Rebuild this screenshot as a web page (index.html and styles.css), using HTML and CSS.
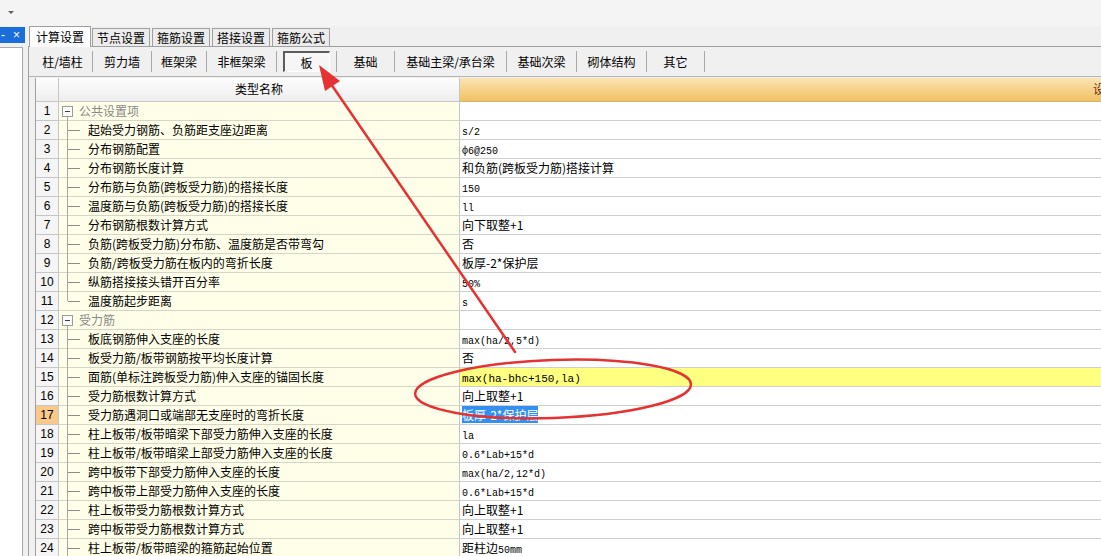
FILE: index.html
```html
<!DOCTYPE html>
<html lang="zh-CN">
<head>
<meta charset="utf-8">
<title>计算设置 - 板</title>
<link rel="stylesheet" href="styles.css">
</head>
<body>
<div class="topbar"><span class="caret"></span></div>
<div class="main">
  <aside class="side">
    <div class="side-title"><span class="dash">-</span><span class="close">×</span></div>
    <div class="side-body"></div>
  </aside>
  <section class="work">
    <nav class="tabs">
      <span class="tab active">计算设置</span>
      <span class="tab">节点设置</span>
      <span class="tab">箍筋设置</span>
      <span class="tab">搭接设置</span>
      <span class="tab">箍筋公式</span>
    </nav>
    <div class="panel">
      <div class="toolbar">
        <span class="tb w60">柱/墙柱</span>
        <span class="tb w59">剪力墙</span>
        <span class="tb w55">框架梁</span>
        <span class="tb w70">非框架梁</span>
        <span class="tb w60"><span class="pressed">板</span></span>
        <span class="tb w58">基础</span>
        <span class="tb w112">基础主梁/承台梁</span>
        <span class="tb w70">基础次梁</span>
        <span class="tb w70">砌体结构</span>
        <span class="tb w58">其它</span>
      </div>
      <div class="grid">
        <div class="row head">
          <div class="num"></div>
          <div class="name">类型名称</div>
          <div class="val"><span class="val-title">设置值</span></div>
        </div>
        <div class="row"><div class="num">1</div><div class="name group first"><span class="box"></span>公共设置项</div><div class="val"></div></div>
        <div class="row"><div class="num">2</div><div class="name child">起始受力钢筋、负筋距支座边距离</div><div class="val"><span class="m">s/2</span></div></div>
        <div class="row"><div class="num">3</div><div class="name child">分布钢筋配置</div><div class="val"><span class="m">ф6@250</span></div></div>
        <div class="row"><div class="num">4</div><div class="name child">分布钢筋长度计算</div><div class="val">和负筋(跨板受力筋)搭接计算</div></div>
        <div class="row"><div class="num">5</div><div class="name child">分布筋与负筋(跨板受力筋)的搭接长度</div><div class="val"><span class="m">150</span></div></div>
        <div class="row"><div class="num">6</div><div class="name child">温度筋与负筋(跨板受力筋)的搭接长度</div><div class="val"><span class="m">ll</span></div></div>
        <div class="row"><div class="num">7</div><div class="name child">分布钢筋根数计算方式</div><div class="val">向下取整+1</div></div>
        <div class="row"><div class="num">8</div><div class="name child">负筋(跨板受力筋)分布筋、温度筋是否带弯勾</div><div class="val">否</div></div>
        <div class="row"><div class="num">9</div><div class="name child">负筋/跨板受力筋在板内的弯折长度</div><div class="val">板厚-2*保护层</div></div>
        <div class="row"><div class="num">10</div><div class="name child">纵筋搭接接头错开百分率</div><div class="val"><span class="m">50%</span></div></div>
        <div class="row"><div class="num">11</div><div class="name child last">温度筋起步距离</div><div class="val"><span class="m">s</span></div></div>
        <div class="row"><div class="num">12</div><div class="name group"><span class="box"></span>受力筋</div><div class="val"></div></div>
        <div class="row"><div class="num">13</div><div class="name child">板底钢筋伸入支座的长度</div><div class="val"><span class="m">max(ha/2,5*d)</span></div></div>
        <div class="row"><div class="num">14</div><div class="name child">板受力筋/板带钢筋按平均长度计算</div><div class="val">否</div></div>
        <div class="row"><div class="num">15</div><div class="name child">面筋(单标注跨板受力筋)伸入支座的锚固长度</div><div class="val hl"><span class="m big">max(ha-bhc+150,la)</span></div></div>
        <div class="row"><div class="num">16</div><div class="name child">受力筋根数计算方式</div><div class="val">向上取整+1</div></div>
        <div class="row"><div class="num cur">17</div><div class="name child">受力筋遇洞口或端部无支座时的弯折长度</div><div class="val"><span class="sel">板厚-2*保护层</span></div></div>
        <div class="row"><div class="num">18</div><div class="name child">柱上板带/板带暗梁下部受力筋伸入支座的长度</div><div class="val"><span class="m">la</span></div></div>
        <div class="row"><div class="num">19</div><div class="name child">柱上板带/板带暗梁上部受力筋伸入支座的长度</div><div class="val"><span class="m">0.6*Lab+15*d</span></div></div>
        <div class="row"><div class="num">20</div><div class="name child">跨中板带下部受力筋伸入支座的长度</div><div class="val"><span class="m">max(ha/2,12*d)</span></div></div>
        <div class="row"><div class="num">21</div><div class="name child">跨中板带上部受力筋伸入支座的长度</div><div class="val"><span class="m">0.6*Lab+15*d</span></div></div>
        <div class="row"><div class="num">22</div><div class="name child">柱上板带受力筋根数计算方式</div><div class="val">向上取整+1</div></div>
        <div class="row"><div class="num">23</div><div class="name child">跨中板带受力筋根数计算方式</div><div class="val">向上取整+1</div></div>
        <div class="row"><div class="num">24</div><div class="name child">柱上板带/板带暗梁的箍筋起始位置</div><div class="val">距柱边<span class="m">50mm</span></div></div>
      </div>
    </div>
  </section>
</div>
<svg class="marks" width="1101" height="556" viewBox="0 0 1101 556">
  <ellipse cx="553" cy="389" rx="138" ry="29" transform="rotate(-2 553 389)" fill="none" stroke="#e53232" stroke-width="2.5"/>
  <line x1="515" y1="352" x2="331" y2="84" stroke="#e53232" stroke-width="2.5" stroke-linecap="round"/>
  <polygon points="319,65 325,91 340,81" fill="#e53232"/>
</svg>
</body>
</html>
```
FILE: styles.css
```css
html, body {
  margin: 0;
  padding: 0;
  overflow: hidden;
}
body {
  width: 1101px;
  height: 556px;
  position: relative;
  background: #f0f0f0;
  font-family: "Noto Sans CJK SC", "Liberation Sans", sans-serif;
  font-size: 12px;
  color: #000;
}

.topbar {
  height: 26px;
  background: #f4f4f4;
}
.caret {
  display: inline-block;
  margin: 11px 0 0 8px;
  border-left: 3px solid transparent;
  border-right: 3px solid transparent;
  border-top: 3px solid #606060;
  vertical-align: top;
}

.main {
  display: flex;
  height: 530px;
}

.side {
  width: 25px;
  display: flex;
  flex-direction: column;
  padding-top: 1px;
}
.side-title {
  height: 16px;
  background: #1a6ddb;
  color: #fff;
  display: flex;
  justify-content: space-between;
  align-items: center;
  padding: 0 5px 0 1px;
  font-family: "Liberation Sans", sans-serif;
  font-size: 12px;
  line-height: 16px;
}
.side-body {
  margin-top: 4px;
  width: 23px;
  flex: 1;
  background: #fff;
  border: 1px solid #a8a8a8;
  border-left: none;
  border-bottom: none;
  box-sizing: border-box;
}

.work {
  margin-left: 3px;
  flex: 1;
  min-width: 0;
  display: flex;
  flex-direction: column;
  overflow: hidden;
}

.tabs {
  display: flex;
  align-items: flex-end;
  height: 20px;
  padding-left: 1px;
  position: relative;
  z-index: 2;
}
.tab {
  box-sizing: border-box;
  height: 18px;
  line-height: 17px;
  padding: 0 4px;
  margin-right: 2px;
  border: 1px solid #a0a0a0;
  border-bottom: none;
  background: #ececec;
}
.tab.active {
  height: 21px;
  line-height: 19px;
  padding: 0 6px;
  margin-bottom: -1px;
  margin-right: 1px;
  background: #fff;
}

.panel {
  flex: 1;
  border-top: 1px solid #a0a0a0;
  border-left: 1px solid #a0a0a0;
  display: flex;
  flex-direction: column;
}

.toolbar {
  display: flex;
  align-items: center;
  height: 29px;
  padding-left: 4px;
  border-bottom: 1px solid #b4b4b4;
  background: #f0f0f0;
}
.tb {
  box-sizing: border-box;
  height: 21px;
  line-height: 20px;
  text-align: center;
  border-right: 1px solid #a8a8a8;
  display: flex;
  align-items: center;
  justify-content: center;
  flex-shrink: 0;
}
.w55 { width: 55px; }
.w58 { width: 58px; }
.w59 { width: 59px; }
.w60 { width: 60px; }
.w70 { width: 70px; }
.w112 { width: 112px; }
.pressed {
  box-sizing: border-box;
  width: 47px;
  height: 21px;
  line-height: 19px;
  margin-left: -1px;
  border-top: 2px solid #5c5c5c;
  border-left: 2px solid #5c5c5c;
  border-bottom: 1px solid #fff;
  border-right: 1px solid #fff;
  background: #f6f6f6;
}

.grid {
  margin: 1px 0 0 6px;
  border-left: 1px solid #a0a0a0;
  width: 1400px;
}
.row {
  display: flex;
  height: 19px;
}
.row > div {
  box-sizing: border-box;
  height: 19px;
  line-height: 18px;
  white-space: nowrap;
  flex-shrink: 0;
}
.num {
  width: 23px;
  background: #f5f5f5;
  border-bottom: 1px solid #c6c6c6;
  border-right: 1px solid #c6c6c6;
  text-align: center;
  font-family: "Liberation Sans", sans-serif;
  font-size: 12px;
}
.num.cur {
  background: #f9c98c;
}
.name {
  width: 401px;
  background: #fffee8;
  border-bottom: 1px solid #d6d6c8;
  border-right: 1px solid #c6c6c6;
  position: relative;
}
.val {
  width: 975px;
  background: #fff;
  border-bottom: 1px solid #cfcfcf;
  padding-left: 2px;
}
.val.hl {
  background: #ffff80;
}

.row.head {
  height: 24px;
}
.row.head > div {
  height: 24px;
  line-height: 22px;
}
.head .num,
.head .name {
  background: linear-gradient(#fdfdfd, #eeeeee);
  border-bottom: 1px solid #c6c6c6;
  text-align: center;
}
.head .val {
  background: linear-gradient(#fbe4b4, #f1c263);
  border-bottom: 1px solid #d8b070;
  padding-left: 633px;
  color: #6a2a10;
}

.child {
  padding-left: 29px;
}
.child::before {
  content: "";
  position: absolute;
  left: 8px;
  top: 0;
  bottom: -1px;
  border-left: 1px solid #a8a8a8;
}
.child.last::before {
  bottom: 9px;
}
.child::after {
  content: "";
  position: absolute;
  left: 9px;
  top: 9px;
  width: 12px;
  border-top: 1px solid #8c8c8c;
}
.group {
  padding-left: 20px;
  color: #8a8a8a;
}
.group::after {
  content: "";
  position: absolute;
  left: 8px;
  top: 14px;
  bottom: -1px;
  border-left: 1px solid #a8a8a8;
}
.box {
  position: absolute;
  left: 3px;
  top: 4px;
  width: 11px;
  height: 11px;
  box-sizing: border-box;
  border: 1px solid #9a9a9a;
  background: #fafafa;
  z-index: 1;
}
.box::after {
  content: "";
  position: absolute;
  left: 2px;
  right: 2px;
  top: 4px;
  border-top: 1px solid #404040;
}

.m {
  font-family: "Liberation Mono", "DejaVu Sans Mono", monospace;
  font-size: 10px;
}
.m.big {
  font-size: 11px;
}
.sel {
  background: #3390f0;
  color: #fff;
}

.marks {
  position: absolute;
  left: 0;
  top: 0;
  pointer-events: none;
  z-index: 10;
}
```
